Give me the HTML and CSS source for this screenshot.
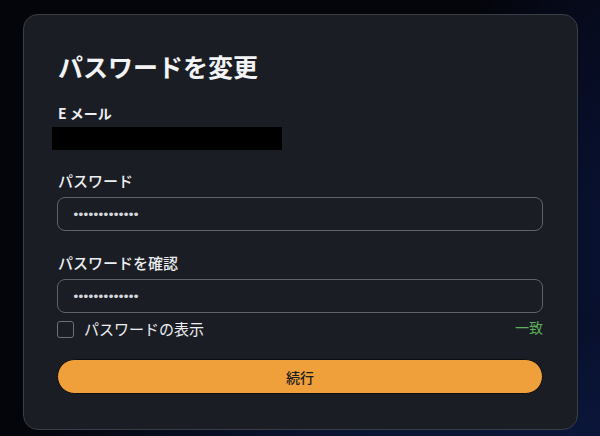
FILE: index.html
```html
<!DOCTYPE html>
<html lang="ja">
<head>
<meta charset="utf-8">
<title>パスワードを変更</title>
<link rel="stylesheet" href="styles.css">
</head>
<body>
<div class="page">
  <form class="card">
    <h1 class="title">パスワードを変更</h1>
    <div class="label label-email">E メール</div>
    <div class="redacted"></div>
    <label class="label label-pw" for="pw">パスワード</label>
    <input class="field" id="pw" type="password" value="aaaaaaaaaaaaa">
    <label class="label label-pw" for="pw2">パスワードを確認</label>
    <input class="field" id="pw2" type="password" value="aaaaaaaaaaaaa">
    <div class="options">
      <label class="show">
        <span class="box"></span>
        <span class="show-text">パスワードの表示</span>
      </label>
      <span class="match">一致</span>
    </div>
    <button class="submit" type="button">続行</button>
  </form>
</div>
</body>
</html>
```
FILE: styles.css
```css
* { box-sizing: border-box; }
html, body { margin: 0; padding: 0; }
body {
  width: 600px;
  height: 436px;
  overflow: hidden;
  font-family: "Noto Sans CJK JP", "Noto Sans", sans-serif;
  color: #f2f3f5;
  background:
    radial-gradient(ellipse 420px 160px at 430px 470px, rgba(18, 44, 110, 0.55), rgba(18, 44, 110, 0) 100%),
    radial-gradient(ellipse 200px 400px at 640px 250px, rgba(14, 30, 90, 0.6), rgba(14, 30, 90, 0) 100%),
    #04050b;
}
.page {
  padding: 14px 22px 0 23px;
}
.card {
  width: 555px;
  height: 416px;
  background: #1a1d23;
  border: 1px solid #3a3e47;
  border-radius: 15px;
  padding: 34px 34px 0 34px;
  display: flex;
  flex-direction: column;
  margin: 0;
}
.title {
  margin: 0;
  font-size: 25px;
  line-height: 34px;
  font-weight: 700;
  letter-spacing: 0;
}
.label {
  display: block;
  font-size: 15px;
  line-height: 20px;
  font-weight: 700;
  color: #eceef1;
}
.label-email {
  margin-top: 20px;
  font-size: 14px;
}
.redacted {
  margin: 4px 0 0 -6px;
  width: 230px;
  height: 23px;
  background: #000;
}
.label-pw {
  margin-top: 21px;
  font-weight: 500;
}
.field {
  margin-top: 6px;
  width: 486px;
  height: 34px;
  margin-left: -1px;
  background: transparent;
  border: 1.5px solid #5d626b;
  border-radius: 8px;
  padding: 0 14px;
  font-family: "DejaVu Sans", sans-serif;
  font-size: 13px;
  letter-spacing: -2.65px;
  color: #d4d6da;
  outline: none;
}
.label-pw + .field + .label-pw { margin-top: 22px; }
.options {
  margin-top: 5px;
  width: 486px;
  margin-left: -1px;
  display: flex;
  justify-content: space-between;
  align-items: flex-start;
  height: 20px;
}
.show {
  display: flex;
  align-items: center;
  gap: 10px;
  padding-top: 2px;
}
.box {
  width: 17px;
  height: 17px;
  border: 1.5px solid #6b7079;
  border-radius: 3px;
}
.show-text {
  font-size: 15px;
  line-height: 18px;
  color: #eceef1;
}
.match {
  font-size: 14px;
  line-height: 18px;
  color: #5fae5c;
}
.submit {
  margin-top: 21px;
  margin-left: -1px;
  width: 486px;
  height: 35px;
  border: 1px solid #0c0d10;
  border-radius: 18px;
  background: #f0a03b;
  color: #1c1c1c;
  font-family: "Noto Sans CJK JP", sans-serif;
  font-size: 14px;
  font-weight: 500;
  padding: 0;
}
```
